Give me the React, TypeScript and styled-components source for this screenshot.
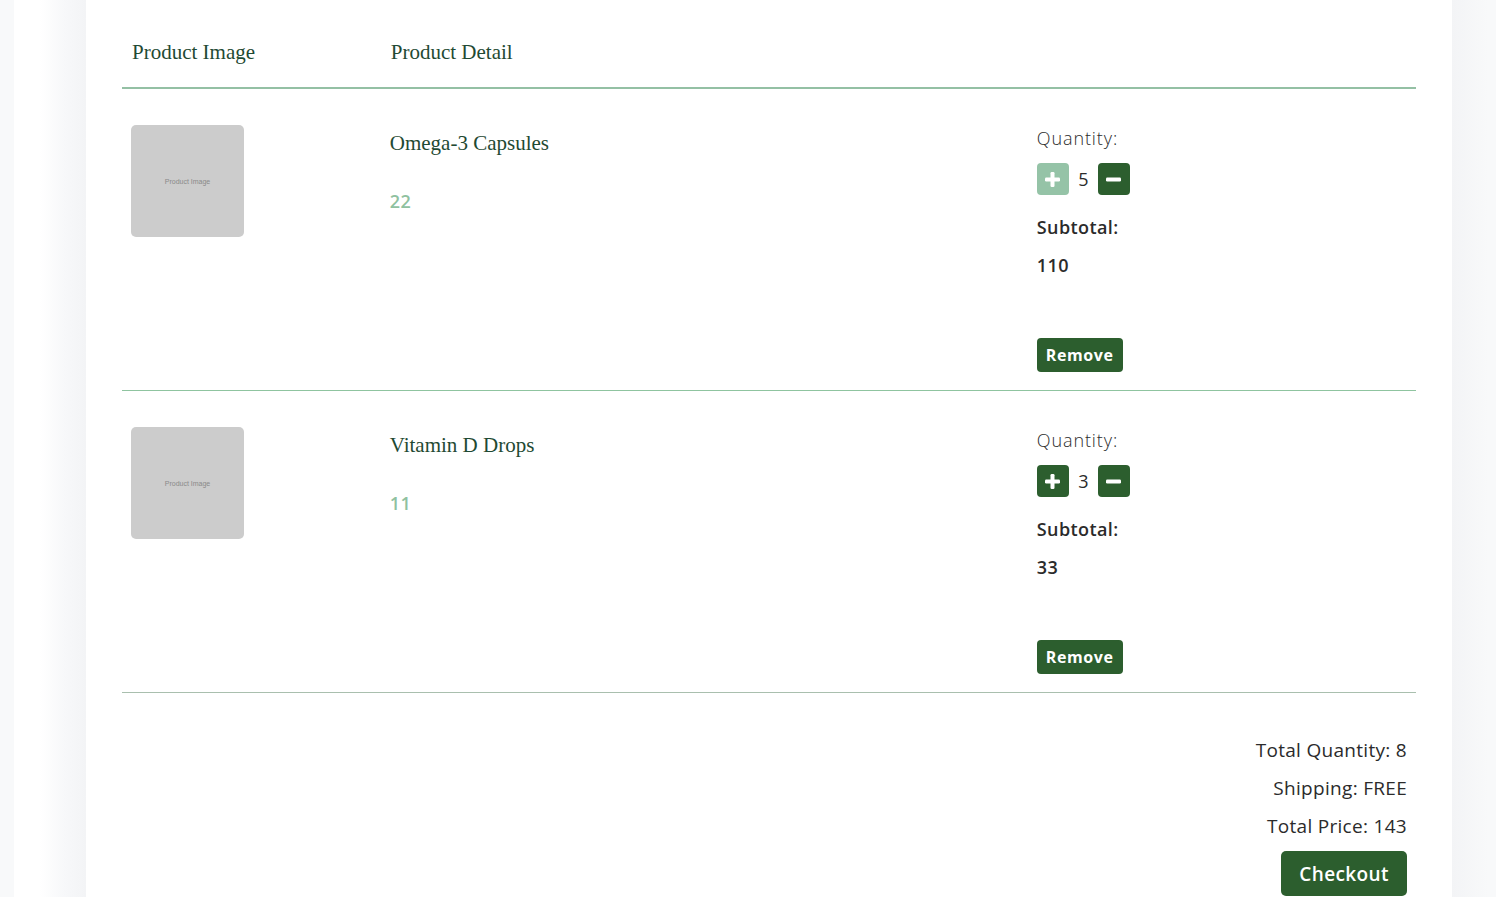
import React, { useState } from "react";
import styled, { createGlobalStyle } from "styled-components";

interface CartItem {
    id: number;
    name: string;
    price: number;
    quantity: number;
    maxQuantity: number;
}

const GlobalStyle = createGlobalStyle`
  * {
    box-sizing: border-box;
  }
  body {
    margin: 0;
    background: #f8f9fa;
    font-family: "Open Sans", "DejaVu Sans", sans-serif;
    color: #2b2b2b;
  }
`;

const Page = styled.div`
  min-height: 897px;
  padding-left: 14px;
  display: flex;
`;

const Shell = styled.div`
  width: 1474px;
  display: flex;
  background: linear-gradient(
    to right,
    #ffffff 0px,
    #ffffff 26px,
    #f7f8fa 50px,
    #f3f4f6 72px,
    #f3f4f6 1438px,
    #f8f9fa 1474px
  );
`;

const Card = styled.div`
  margin-left: 72px;
  width: 1366px;
  min-height: 897px;
  background: #ffffff;
  padding: 0 36px;
`;

const HeaderRow = styled.div`
  display: grid;
  grid-template-columns: 20% 50% 30%;
  padding-top: 40px;
  height: 89px;
  border-bottom: 2px solid #94c0a4;
`;

const HeaderCell = styled.div`
  padding: 0 10px;
  font-family: "Liberation Serif", "DejaVu Serif", serif;
  font-size: 21px;
  line-height: 24px;
  color: #1f4a33;
`;

const ItemRow = styled.div<{ $last?: boolean }>`
  display: grid;
  grid-template-columns: 20% 50% 30%;
  padding: 36px 0 18px;
  border-bottom: 1px solid ${(p) => (p.$last ? "#a9bfae" : "#8fc4a0")};
`;

const Cell = styled.div`
  padding: 0 9px;
`;

const ImageBox = styled.div`
  width: 113px;
  height: 112px;
  border-radius: 5px;
  background: #cccccc;
  display: flex;
  align-items: center;
  justify-content: center;
  font-family: "Liberation Sans", Arial, sans-serif;
  font-size: 7px;
  color: #8a8a8a;
`;

const ProductName = styled.div`
  margin-top: 5px;
  font-family: "Liberation Serif", "DejaVu Serif", serif;
  font-size: 21px;
  line-height: 26px;
  color: #1f4a33;
`;

const Price = styled.div`
  margin-top: 34px;
  font-size: 18px;
  line-height: 22px;
  font-weight: 600;
  letter-spacing: 0.5px;
  color: #8fc1a0;
`;

const RightCol = styled.div`
  padding: 0 9px;
  display: flex;
  flex-direction: column;
  align-items: flex-start;
`;

const Label = styled.div<{ $bold?: boolean }>`
  font-size: 18px;
  line-height: 22px;
  letter-spacing: ${(p) => (p.$bold ? "0.4px" : "0.9px")};
  font-weight: ${(p) => (p.$bold ? 600 : 300)};
  color: #2b2b2b;
`;

const QtyLabel = styled(Label)`
  margin-top: 2px;
`;

const QtyRow = styled.div`
  margin-top: 14px;
  display: flex;
  align-items: center;
  gap: 9px;
`;

const QtyButton = styled.button<{ $disabled?: boolean }>`
  width: 32px;
  height: 32px;
  border: none;
  border-radius: 4px;
  padding: 0;
  display: flex;
  align-items: center;
  justify-content: center;
  background: ${(p) => (p.$disabled ? "#95c3a7" : "#2c5e2e")};
  cursor: ${(p) => (p.$disabled ? "default" : "pointer")};
`;

const QtyValue = styled.span`
  font-size: 18px;
  font-weight: 500;
  min-width: 11px;
  text-align: center;
`;

const SubtotalLabel = styled(Label)`
  margin-top: 21px;
`;

const SubtotalValue = styled(Label)`
  margin-top: 16px;
`;

const RemoveButton = styled.button`
  margin-top: 62px;
  height: 34px;
  padding: 0 9px;
  border: none;
  border-radius: 4px;
  background: #2c5e2e;
  color: #ffffff;
  font-family: "Open Sans", "DejaVu Sans", sans-serif;
  font-size: 16px;
  font-weight: 700;
  letter-spacing: 0.6px;
  cursor: pointer;
`;

const Totals = styled.div`
  padding: 45px 9px 0 0;
  display: flex;
  flex-direction: column;
  align-items: flex-end;
`;

const TotalLine = styled.div`
  font-size: 19px;
  line-height: 24px;
  font-weight: 500;
  letter-spacing: 0.3px;
  margin-bottom: 14px;
  color: #2b2b2b;
`;

const CheckoutButton = styled.button`
  margin-top: -1px;
  height: 45px;
  padding: 0 18px;
  border: none;
  border-radius: 5px;
  background: #2c5e2e;
  color: #ffffff;
  font-family: "Open Sans", "DejaVu Sans", sans-serif;
  font-size: 19px;
  font-weight: 600;
  letter-spacing: 0.4px;
  cursor: pointer;
`;

const PlusIcon = () => (
    <svg width="15" height="15" viewBox="0 0 15 15">
        <rect x="5.5" y="0" width="4" height="15" rx="1.2" fill="#fff" />
        <rect x="0" y="5.5" width="15" height="4" rx="1.2" fill="#fff" />
    </svg>
);

const MinusIcon = () => (
    <svg width="15" height="15" viewBox="0 0 15 15">
        <rect x="0" y="5.5" width="15" height="4" rx="1.2" fill="#fff" />
    </svg>
);

const initialItems: CartItem[] = [
    { id: 1, name: "Omega-3 Capsules", price: 22, quantity: 5, maxQuantity: 5 },
    { id: 2, name: "Vitamin D Drops", price: 11, quantity: 3, maxQuantity: 10 },
];

const App = () => {
    const [items, setItems] = useState<CartItem[]>(initialItems);

    const changeQty = (id: number, delta: number) => {
        setItems(
            items.map((item) =>
                item.id === id
                    ? {
                          ...item,
                          quantity: Math.min(
                              item.maxQuantity,
                              Math.max(1, item.quantity + delta)
                          ),
                      }
                    : item
            )
        );
    };

    const removeItem = (id: number) => {
        setItems(items.filter((item) => item.id !== id));
    };

    const totalQuantity = items.reduce((sum, i) => sum + i.quantity, 0);
    const totalPrice = items.reduce((sum, i) => sum + i.quantity * i.price, 0);

    return (
        <>
            <GlobalStyle />
            <Page>
                <Shell>
                    <Card>
                        <HeaderRow>
                            <HeaderCell>Product Image</HeaderCell>
                            <HeaderCell>Product Detail</HeaderCell>
                            <HeaderCell />
                        </HeaderRow>
                        {items.map((item, index) => (
                            <ItemRow key={item.id} $last={index === items.length - 1}>
                                <Cell>
                                    <ImageBox>Product Image</ImageBox>
                                </Cell>
                                <Cell>
                                    <ProductName>{item.name}</ProductName>
                                    <Price>{item.price}</Price>
                                </Cell>
                                <RightCol>
                                    <QtyLabel>Quantity:</QtyLabel>
                                    <QtyRow>
                                        <QtyButton
                                            $disabled={item.quantity >= item.maxQuantity}
                                            onClick={() => changeQty(item.id, 1)}
                                        >
                                            <PlusIcon />
                                        </QtyButton>
                                        <QtyValue>{item.quantity}</QtyValue>
                                        <QtyButton onClick={() => changeQty(item.id, -1)}>
                                            <MinusIcon />
                                        </QtyButton>
                                    </QtyRow>
                                    <SubtotalLabel $bold>Subtotal:</SubtotalLabel>
                                    <SubtotalValue $bold>{item.price * item.quantity}</SubtotalValue>
                                    <RemoveButton onClick={() => removeItem(item.id)}>
                                        Remove
                                    </RemoveButton>
                                </RightCol>
                            </ItemRow>
                        ))}
                        <Totals>
                            <TotalLine>Total Quantity: {totalQuantity}</TotalLine>
                            <TotalLine>Shipping: FREE</TotalLine>
                            <TotalLine>Total Price: {totalPrice}</TotalLine>
                            <CheckoutButton>Checkout</CheckoutButton>
                        </Totals>
                    </Card>
                </Shell>
            </Page>
        </>
    );
};

export default App;
